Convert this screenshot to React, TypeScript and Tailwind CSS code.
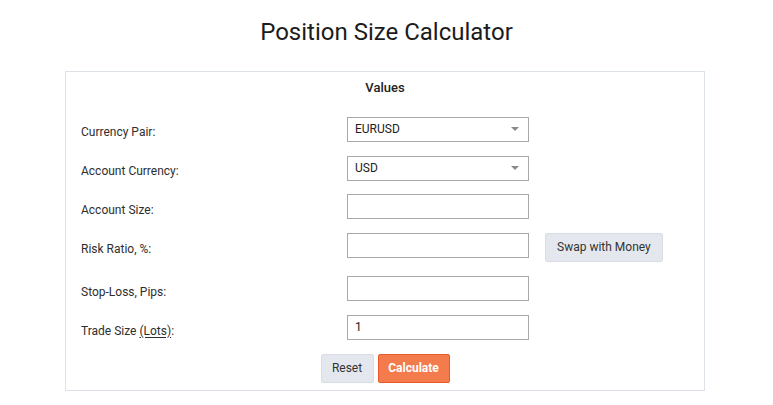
import React from "react";

function Arrow() {
  return (
    <svg
      className="pointer-events-none absolute right-[10px] top-[11px]"
      width="8"
      height="4"
      viewBox="0 0 8 4"
    >
      <path d="M0 0 H8 L4 4 Z" fill="#8a8a8a" />
    </svg>
  );
}

function SelectBox({ value, options }: { value: string; options: string[] }) {
  return (
    <div className="relative h-[25px] w-[182px]">
      <select
        defaultValue={value}
        className="h-[25px] w-[182px] appearance-none rounded-none border border-[#a9a9a9] bg-white pl-[7px] pr-[20px] text-[12px] leading-[23px] text-[#222] outline-none"
      >
        {options.map((o) => (
          <option key={o} value={o}>
            {o}
          </option>
        ))}
      </select>
      <Arrow />
    </div>
  );
}

function TextBox({ value }: { value?: string }) {
  return (
    <input
      type="text"
      defaultValue={value}
      className="h-[25px] w-[182px] rounded-none border border-[#a9a9a9] bg-white px-[7px] text-[12px] leading-[23px] text-[#222] outline-none"
    />
  );
}

function Label({ children }: { children: React.ReactNode }) {
  return (
    <div className="w-[266px] shrink-0 pt-[7px] text-[12px] leading-[18px] text-[#2e2e2e]">
      {children}
    </div>
  );
}

export default function App() {
  return (
    <div className="min-h-[405px] bg-white font-['Roboto','Liberation_Sans',sans-serif]">
      <h1 className="pt-[18px] text-center text-[24px] font-normal leading-[28px] text-[#1c1c1c]">
        Position Size Calculator
      </h1>
      <div className="ml-[65px] mt-[25px] w-[640px] border border-[#dce2e8] px-[15px] pb-[7px] pt-[6px]">
        <div className="text-center text-[13px] font-medium leading-[19.5px] text-[#222]">
          Values
        </div>
        <div className="mt-[18px] flex flex-col gap-[14px]">
          <div className="flex items-start">
            <Label>Currency Pair:</Label>
            <SelectBox
              value="EURUSD"
              options={["EURUSD", "GBPUSD", "USDJPY", "USDCHF", "AUDUSD"]}
            />
          </div>
          <div className="flex items-start">
            <Label>Account Currency:</Label>
            <SelectBox value="USD" options={["USD", "EUR", "GBP", "JPY"]} />
          </div>
          <div className="flex items-start">
            <Label>Account Size:</Label>
            <TextBox />
          </div>
          <div className="flex items-start">
            <Label>Risk Ratio, %:</Label>
            <TextBox />
            <button className="ml-[16px] h-[29px] rounded-[2px] border border-[#d9dde3] bg-[#e4e8ee] px-[11px] text-[12px] leading-[27px] text-[#333]">
              Swap with Money
            </button>
          </div>
          <div className="flex items-start">
            <Label>Stop-Loss, Pips:</Label>
            <TextBox />
          </div>
          <div className="flex items-start">
            <Label>
              Trade Size <span className="underline underline-offset-2">(Lots)</span>:
            </Label>
            <TextBox value="1" />
          </div>
        </div>
        <div className="mt-[14px] flex justify-center gap-[4px]">
          <button className="h-[29px] w-[53px] rounded-[2px] border border-[#d9dde3] bg-[#e4e8ee] text-[12px] leading-[27px] text-[#333]">
            Reset
          </button>
          <button className="h-[29px] w-[72px] rounded-[2px] border border-[#e85a2b] bg-[#f47b4b] text-[12px] font-bold leading-[27px] text-white">
            Calculate
          </button>
        </div>
      </div>
    </div>
  );
}
